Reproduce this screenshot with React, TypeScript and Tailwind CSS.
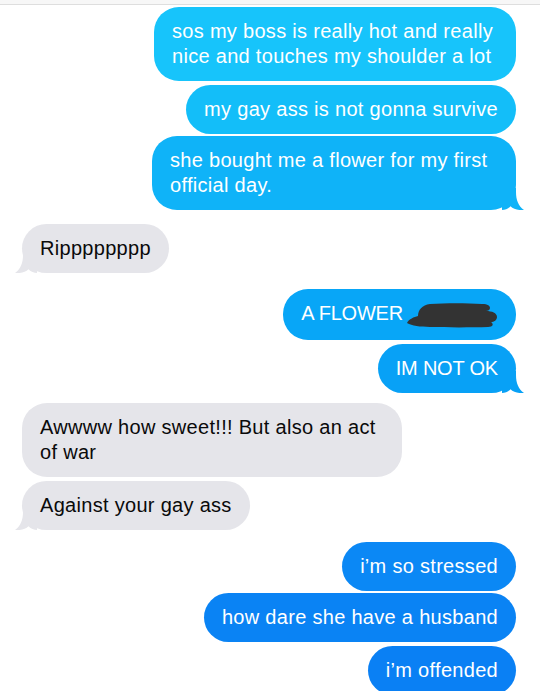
import React from "react";

type Message = {
  id: number;
  fromMe: boolean;
  lines: string[];
  color?: string;
  gap: string;
  width?: string;
  tail?: boolean;
  caps?: boolean;
  redacted?: boolean;
};

const messages: Message[] = [
  { id: 1, fromMe: true, lines: ["sos my boss is really hot and really", "nice and touches my shoulder a lot"], color: "#17c4fb", gap: "mt-[2px]", width: "w-[362px]" },
  { id: 2, fromMe: true, lines: ["my gay ass is not gonna survive"], color: "#13bef9", gap: "mt-[4px]" },
  { id: 3, fromMe: true, lines: ["she bought me a flower for my first", "official day."], color: "#0fb3f8", gap: "mt-[2px]", width: "w-[364px]", tail: true },
  { id: 4, fromMe: false, lines: ["Ripppppppp"], gap: "mt-[14px]", tail: true },
  { id: 5, fromMe: true, lines: ["A FLOWER"], color: "#08a6f7", gap: "mt-[16px]", caps: true, redacted: true },
  { id: 6, fromMe: true, lines: ["IM NOT OK"], color: "#08a1f6", gap: "mt-[4px]", caps: true, tail: true },
  { id: 7, fromMe: false, lines: ["Awwww how sweet!!! But also an act", "of war"], gap: "mt-[10px]", width: "w-[380px]" },
  { id: 8, fromMe: false, lines: ["Against your gay ass"], gap: "mt-[4px]", tail: true },
  { id: 9, fromMe: true, lines: ["i\u2019m so stressed"], color: "#0b88f5", gap: "mt-[12px]" },
  { id: 10, fromMe: true, lines: ["how dare she have a husband"], color: "#0a83f4", gap: "mt-[2px]" },
  { id: 11, fromMe: true, lines: ["i\u2019m offended"], color: "#0a80f4", gap: "mt-[4px]" },
];

function Tail({ color, left }: { color: string; left: boolean }) {
  return (
    <svg
      className={left ? "absolute bottom-0 left-[-7px] -scale-x-100" : "absolute bottom-0 right-[-8px]"}
      width="22"
      height="22"
      viewBox="0 0 22 22"
    >
      <path d="M0 0 H14 V4 C14 12 16.5 18 22 22 C16.5 22.6 11.5 21 8.5 18.2 C6 20.8 3 22 0 22 Z" fill={color} />
    </svg>
  );
}

function Scribble() {
  return (
    <svg className="ml-[3px] inline-block align-middle" width="92" height="26" viewBox="0 0 92 26">
      <path
        d="M1 21 C3 17 8 15 12 14 C12 8 16 3 24 2 C40 1 60 1 76 2 C82 2 84 4 84 6 C84 8 82 9 80 9 C86 9 91 11 91 15 C91 18 88 20 85 20 C88 22 87 25 82 25 C66 25.5 40 25.5 24 25 C14 24.7 6 24 1 21 Z"
        fill="#333333"
      />
    </svg>
  );
}

function Bubble({ m }: { m: Message }) {
  const bg = m.fromMe ? m.color ?? "#0a84ff" : "#e5e5ea";
  return (
    <div className={`flex ${m.fromMe ? "justify-end" : "justify-start"} ${m.gap}`}>
      <div
        className={`relative rounded-[25px] px-[18px] py-[12px] text-[20px] leading-[25px] ${
          m.caps ? "tracking-[-0.2px]" : "tracking-[0.3px]"
        } ${m.fromMe ? "text-white" : "text-[#0a0a0a]"} ${m.width ?? "w-fit"}`}
        style={{ backgroundColor: bg }}
      >
        {m.tail ? <Tail color={bg} left={!m.fromMe} /> : null}
        <span className="relative whitespace-nowrap">
          {m.lines.map((line, i) => (
            <React.Fragment key={i}>
              {i > 0 ? <br /> : null}
              {line}
            </React.Fragment>
          ))}
          {m.redacted ? <Scribble /> : null}
        </span>
      </div>
    </div>
  );
}

export default function App() {
  return (
    <div className="h-[691px] w-[540px] overflow-hidden bg-white font-['Liberation_Sans',Arial,sans-serif]">
      <div className="h-[5px] border-b border-[#dedede] bg-[#f7f7f7]" />
      <div className="pl-[22px] pr-[24px]">
        {messages.map((m) => (
          <Bubble key={m.id} m={m} />
        ))}
      </div>
    </div>
  );
}
